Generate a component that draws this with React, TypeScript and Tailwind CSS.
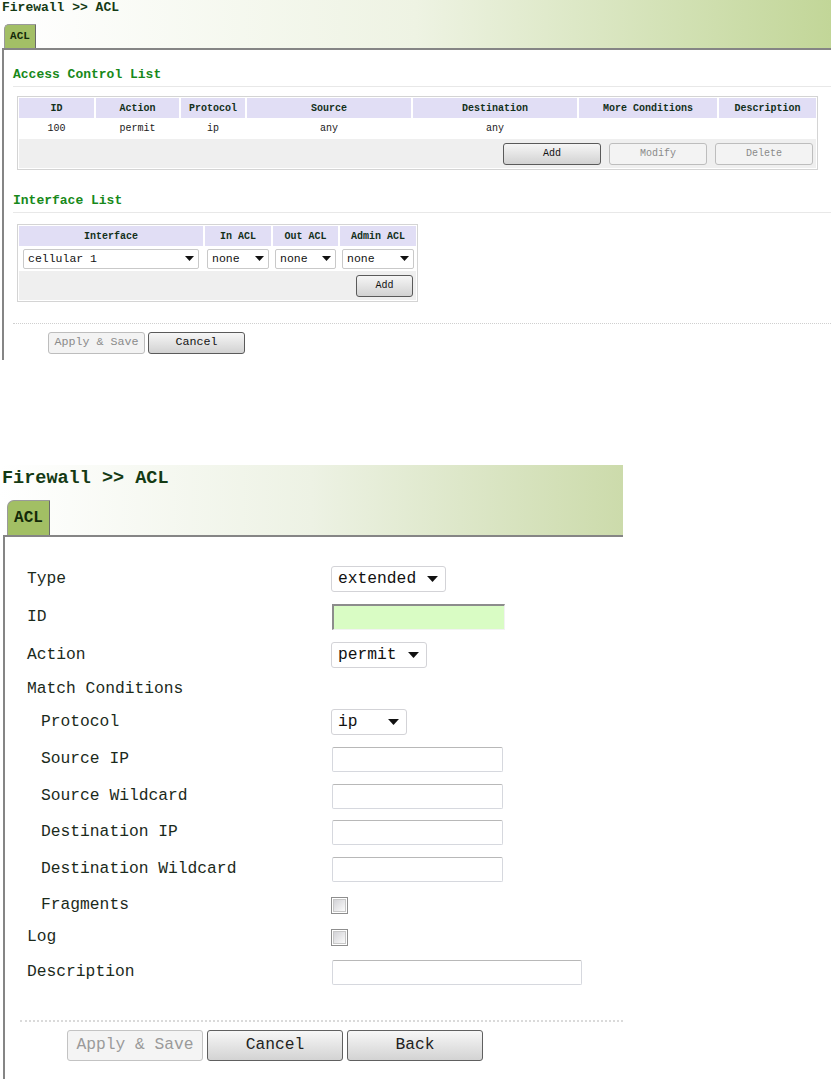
import React from "react";

const mono = "font-['Liberation_Mono','DejaVu_Sans_Mono',monospace]";

function Caret({ w = 9 }: { w?: number }) {
  return (
    <svg width={w} height={Math.round(w * 0.55)} viewBox="0 0 10 5.5" className="shrink-0">
      <polygon points="0,0 10,0 5,5.5" fill="#111" />
    </svg>
  );
}

function SmallSelect({ value, className }: { value: string; className: string }) {
  return (
    <div
      className={`h-[20px] bg-white border border-[#c9c9c9] rounded-[2px] flex items-center justify-between pl-[4px] pr-[4px] text-[11.5px] text-[#111] ${className}`}>
      <span>{value}</span>
      <Caret w={9} />
    </div>
  );
}

function SmallButton({ label, disabled, className }: { label: string; disabled?: boolean; className: string }) {
  return (
    <div
      className={`h-[22px] rounded-[3px] flex items-center justify-center ${
        disabled
          ? "border border-[#bdbdbd] bg-[#f3f3f3] text-[#8a8a8a]"
          : "border border-[#5a5a5a] bg-linear-to-b from-[#f6f6f6] to-[#d2d2d2] text-[#111]"
      } ${className}`}>
      {label}
    </div>
  );
}

function BigSelect({ value, width }: { value: string; width: string }) {
  return (
    <div
      className={`h-[26px] ${width} bg-white border border-[#d3d3d7] rounded-[3px] flex items-center justify-between pl-[6px] pr-[7px] text-[16.3px] text-[#111]`}>
      <span>{value}</span>
      <Caret w={11} />
    </div>
  );
}

function BigInput({ width = "w-[171px]" }: { width?: string }) {
  return (
    <div className={`h-[25px] ${width} ml-[1px] bg-white border border-[#d6d8de] border-t-[#b8b8b8] rounded-[2px]`} />
  );
}

function CheckBox() {
  return (
    <div className="w-[17px] h-[17px] border border-[#8e8e8e] p-[1px] bg-white">
      <div className="w-full h-full border border-[#c8c8c8] bg-linear-to-br from-[#d2d2d6] to-[#fbfbfb]" />
    </div>
  );
}

function BigButton({ label, disabled }: { label: string; disabled?: boolean }) {
  return (
    <div
      className={`w-[136px] h-[31px] rounded-[3px] flex items-center justify-center text-[16.3px] ${
        disabled
          ? "border border-[#c3c3c3] bg-[#f4f4f4] text-[#9a9a9a]"
          : "border border-[#606060] bg-linear-to-b from-[#f7f7f7] to-[#d3d3d3] text-[#222]"
      }`}>
      {label}
    </div>
  );
}

function TopPage() {
  const aclCols = ["ID", "Action", "Protocol", "Source", "Destination", "More Conditions", "Description"];
  const aclRow = ["100", "permit", "ip", "any", "any", "", ""];
  return (
    <div className="h-[360px] overflow-hidden">
      {/* header with breadcrumb and tab */}
      <div className="h-[48px] flex flex-col bg-linear-to-r from-white via-[#eef3e3] to-[#c2d698]">
        <div className="h-[24px] pl-[2px] text-[13px] leading-[16px] font-bold text-[#143a14]">
          Firewall &gt;&gt; ACL
        </div>
        <div className="ml-[4px] h-[24px] w-[32px] rounded-tl-[5px] border-l border-t border-r border-l-[#9a9a9a] border-t-[#9a9a9a] border-r-[#6a6a6a] bg-[#a3bf66] flex items-center justify-center text-[11px] font-bold text-[#142a08]">
          ACL
        </div>
      </div>

      <div className="ml-[2px] h-[400px] border-l-2 border-t-2 border-[#858585] pl-[9px]">
        <div className="mt-[17px] pb-[3px] border-b border-[#e8e8e8] text-[13px] leading-[16px] font-bold text-[#17891a]">
          Access Control List
        </div>

        <div className="mt-[9px] ml-[4px] w-[801px] border border-[#d4d4d4] p-[1px] bg-white text-[10px]">
          <div className="grid grid-cols-[75px_83px_64px_164px_164px_138px_1fr] gap-x-[2px] h-[20px]">
            {aclCols.map((c) => (
              <div key={c} className="bg-[#e1def5] flex items-center justify-center font-bold text-[#13301a]">
                {c}
              </div>
            ))}
          </div>
          <div className="grid grid-cols-[75px_83px_64px_164px_164px_138px_1fr] gap-x-[2px] h-[21px]">
            {aclRow.map((c, i) => (
              <div key={i} className="flex items-center justify-center text-[#1a1a1a]">
                {c}
              </div>
            ))}
          </div>
          <div className="h-[29px] bg-[#efefef] flex items-center justify-end gap-[8px] pr-[3px]">
            <SmallButton label="Add" className="w-[98px]" />
            <SmallButton label="Modify" disabled className="w-[98px]" />
            <SmallButton label="Delete" disabled className="w-[98px]" />
          </div>
        </div>

        <div className="mt-[23px] pb-[3px] border-b border-[#e8e8e8] text-[13px] leading-[16px] font-bold text-[#17891a]">
          Interface List
        </div>

        <div className="mt-[11px] ml-[4px] w-[401px] border border-[#d4d4d4] p-[1px] bg-white text-[10px]">
          <div className="grid grid-cols-[184px_66px_65px_1fr] gap-x-[2px] h-[20px]">
            {["Interface", "In ACL", "Out ACL", "Admin ACL"].map((c) => (
              <div key={c} className="bg-[#e1def5] flex items-center justify-center font-bold text-[#13301a]">
                {c}
              </div>
            ))}
          </div>
          <div className="grid grid-cols-[184px_66px_65px_1fr] gap-x-[2px] h-[25px] items-center">
            <div className="px-[4px]">
              <SmallSelect value="cellular 1" className="w-full" />
            </div>
            <div className="px-[2px]">
              <SmallSelect value="none" className="w-full" />
            </div>
            <div className="px-[2px]">
              <SmallSelect value="none" className="w-full" />
            </div>
            <div className="px-[2px]">
              <SmallSelect value="none" className="w-full" />
            </div>
          </div>
          <div className="h-[29px] bg-[#efefef] flex items-center justify-end pr-[3px]">
            <SmallButton label="Add" className="w-[57px]" />
          </div>
        </div>

        <div className="mt-[21px] border-t border-dotted border-[#cfcfcf]" />
        <div className="mt-[8px] ml-[35px] flex gap-[3px] text-[11.7px]">
          <SmallButton label="Apply & Save" disabled className="w-[97px]" />
          <SmallButton label="Cancel" className="w-[97px]" />
        </div>
      </div>
    </div>
  );
}

type Row = { label: string; h: string; indent?: boolean; control: React.ReactNode };

function BottomPage() {
  const rows: Row[] = [
    { label: "Type", h: "h-[38px]", control: <BigSelect value="extended" width="w-[115px]" /> },
    {
      label: "ID",
      h: "h-[38px]",
      control: (
        <div className="ml-[1px] h-[26px] w-[173px] bg-[#d9fcc4] border-t-2 border-l-2 border-[#8c8c8c] border-r border-b border-r-[#f2f2f2] border-b-[#f2f2f2]" />
      ),
    },
    { label: "Action", h: "h-[38px]", control: <BigSelect value="permit" width="w-[96px]" /> },
    { label: "Match Conditions", h: "h-[30px]", control: null },
    { label: "Protocol", h: "h-[36px]", indent: true, control: <BigSelect value="ip" width="w-[76px]" /> },
    { label: "Source IP", h: "h-[38px]", indent: true, control: <BigInput /> },
    { label: "Source Wildcard", h: "h-[36px]", indent: true, control: <BigInput /> },
    { label: "Destination IP", h: "h-[36px]", indent: true, control: <BigInput /> },
    { label: "Destination Wildcard", h: "h-[38px]", indent: true, control: <BigInput /> },
    { label: "Fragments", h: "h-[34px]", indent: true, control: <CheckBox /> },
    { label: "Log", h: "h-[30px]", control: <CheckBox /> },
    { label: "Description", h: "h-[40px]", control: <BigInput width="w-[250px]" /> },
  ];

  return (
    <div className="w-[623px] h-[614px] overflow-hidden">
      <div className="h-[70px] flex flex-col bg-linear-to-r from-white via-[#edf2e4] to-[#ccdbab]">
        <div className="h-[35px] pt-[2px] pl-[2px] text-[18.5px] leading-[24px] font-bold text-[#143a14]">
          Firewall &gt;&gt; ACL
        </div>
        <div className="ml-[7px] h-[35px] w-[43px] rounded-tl-[7px] border-l border-t border-r border-l-[#9a9a9a] border-t-[#9a9a9a] border-r-[#6a6a6a] bg-[#a2bf64] flex items-center justify-center text-[16px] font-bold text-[#142a08]">
          ACL
        </div>
      </div>

      <div className="ml-[3px] h-[600px] border-l-2 border-t-2 border-[#858585]">
        <div className="pt-[23px]">
          {rows.map((r) => (
            <div key={r.label} className={`${r.h} grid grid-cols-[304px_1fr] items-center pl-[22px]`}>
              <div className={`text-[16.3px] text-[#1b2a1b] ${r.indent ? "pl-[14px]" : ""}`}>{r.label}</div>
              <div className="flex items-center">{r.control}</div>
            </div>
          ))}
        </div>

        <div className="mt-[28px] ml-[15px] border-t-2 border-dotted border-[#dadada]" />
        <div className="mt-[8px] ml-[62px] flex gap-[4px]">
          <BigButton label="Apply & Save" disabled />
          <BigButton label="Cancel" />
          <BigButton label="Back" />
        </div>
      </div>
    </div>
  );
}

export default function App() {
  return (
    <div className={`w-[831px] bg-white ${mono}`}>
      <TopPage />
      <div className="h-[105px]" />
      <BottomPage />
    </div>
  );
}
